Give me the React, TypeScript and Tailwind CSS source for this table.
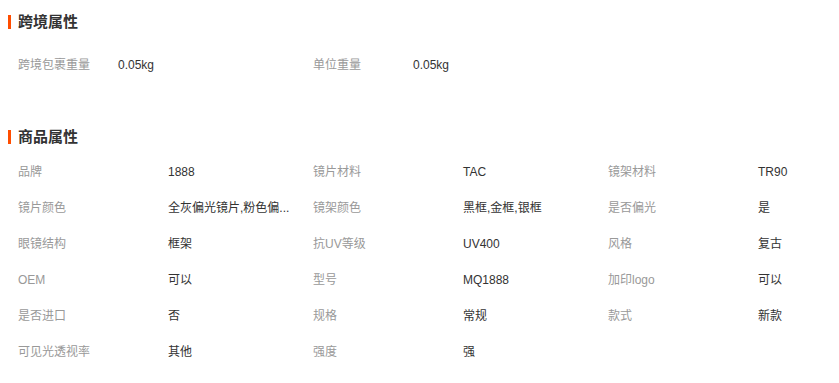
import React from "react";

const font = { fontFamily: '"Liberation Sans", "Noto Sans CJK SC", sans-serif' };

const section2: [string, string][] = [
  ["品牌", "1888"],
  ["镜片材料", "TAC"],
  ["镜架材料", "TR90"],
  ["镜片颜色", "全灰偏光镜片,粉色偏..."],
  ["镜架颜色", "黑框,金框,银框"],
  ["是否偏光", "是"],
  ["眼镜结构", "框架"],
  ["抗UV等级", "UV400"],
  ["风格", "复古"],
  ["OEM", "可以"],
  ["型号", "MQ1888"],
  ["加印logo", "可以"],
  ["是否进口", "否"],
  ["规格", "常规"],
  ["款式", "新款"],
  ["可见光透视率", "其他"],
  ["强度", "强"],
];

function Title({ text }: { text: string }) {
  return (
    <div className="flex items-center h-[16px] pl-[8px]">
      <div className="w-[3px] h-[14px] bg-[#ff4d00]" />
      <div className="ml-[7px] text-[15px] font-bold text-[#333] leading-[16px]">{text}</div>
    </div>
  );
}

export default function App() {
  return (
    <div className="w-[839px] h-[383px] bg-white overflow-hidden pt-[14px]" style={font}>
      <Title text="跨境属性" />
      <div className="mt-[17px] pl-[18px] grid grid-cols-[295px_295px] text-[12px]">
        <div className="flex items-center h-[36px]">
          <div className="w-[100px] text-[#999]">跨境包裹重量</div>
          <div className="text-[#333]">0.05kg</div>
        </div>
        <div className="flex items-center h-[36px]">
          <div className="w-[100px] text-[#999]">单位重量</div>
          <div className="text-[#333]">0.05kg</div>
        </div>
      </div>
      <div className="mt-[46px]">
        <Title text="商品属性" />
      </div>
      <div className="mt-[9px] pl-[18px] grid grid-cols-[295px_295px_230px] text-[12px]">
        {section2.map(([k, v]) => (
          <div key={k} className="flex items-center h-[36px]">
            <div className="w-[150px] shrink-0 text-[#999]">{k}</div>
            <div className="whitespace-nowrap text-[#333]">{v}</div>
          </div>
        ))}
      </div>
    </div>
  );
}
